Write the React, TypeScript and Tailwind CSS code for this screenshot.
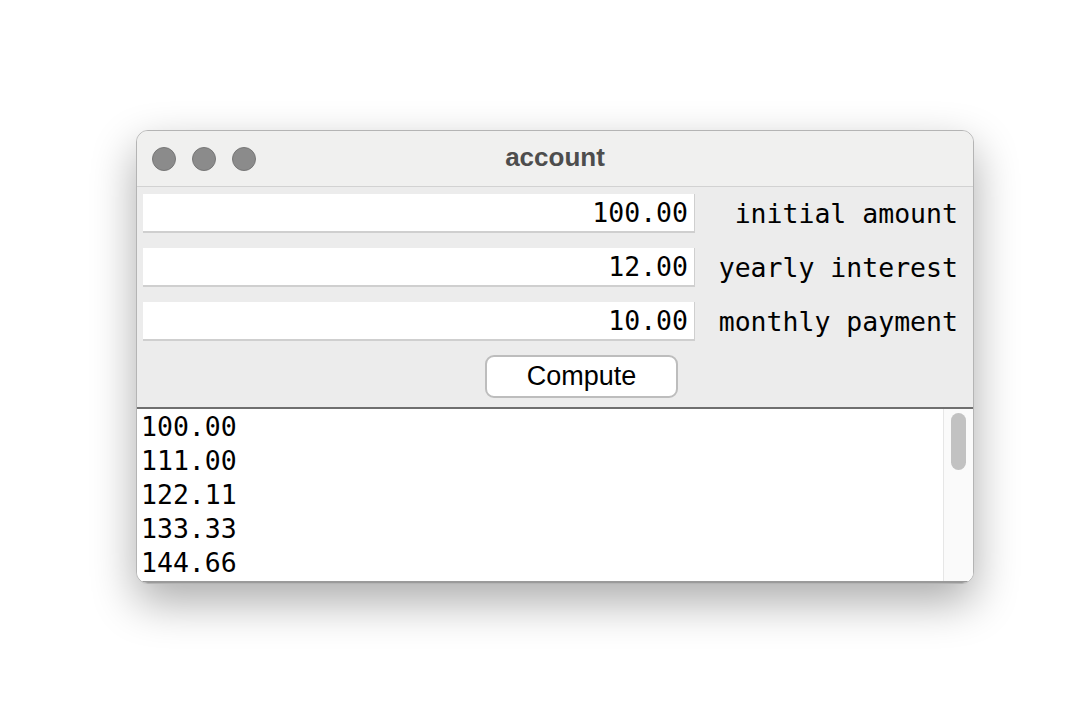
const mono = { fontFamily: '"DejaVu Sans Mono", "Liberation Mono", monospace' }

type Field = { value: string; label: string }

const fields: Field[] = [
    { value: "100.00", label: "initial amount" },
    { value: "12.00", label: "yearly interest" },
    { value: "10.00", label: "monthly payment" },
]

const lines: string[] = ["100.00", "111.00", "122.11", "133.33", "144.66"]

const App = () => {
    return (
        <div className="w-[1080px] h-[720px] bg-white pl-[136px] pt-[130px]">
            <div className="w-[838px] h-[454px] rounded-[12px] border border-[#b4b4b4] bg-[#ececec] overflow-hidden flex flex-col shadow-[0_18px_45px_rgba(0,0,0,0.33)]">
                {/* title bar */}
                <div className="relative h-[56px] shrink-0 bg-[#f0f0ef] border-b border-[#d2d2d2] flex items-center">
                    <div className="flex gap-[16px] pl-[15px]">
                        <div className="w-[24px] h-[24px] rounded-full bg-[#8b8b8b] border border-[#777]" />
                        <div className="w-[24px] h-[24px] rounded-full bg-[#8b8b8b] border border-[#777]" />
                        <div className="w-[24px] h-[24px] rounded-full bg-[#8b8b8b] border border-[#777]" />
                    </div>
                    <div className="absolute inset-0 flex items-center justify-center pb-[2px] text-[26px] font-bold text-[#4d4d4d]" style={{ fontFamily: '"Liberation Sans", Arial, sans-serif' }}>
                        account
                    </div>
                </div>

                {/* form */}
                <div className="flex flex-col pt-[7px] pl-[6px] pr-[15px] gap-[15px]">
                    {fields.map(f => (
                        <div key={f.label} className="flex items-center h-[39px] leading-[39px]" style={mono}>
                            <div className="w-[552px] h-[39px] bg-white border-b-2 border-r border-[#cfcfcf] flex items-center justify-end pr-[6px] text-[26.5px] text-black">
                                {f.value}
                            </div>
                            <div className="flex-1 text-right text-[26.5px] text-black">{f.label}</div>
                        </div>
                    ))}
                </div>
                <div className="pl-[348px] pt-[14px] h-[66px] shrink-0">
                    <div className="w-[193px] h-[43px] rounded-[9px] bg-white border-2 border-[#bdbdbd] flex items-center justify-center text-[27px] text-black" style={{ fontFamily: '"Liberation Sans", Arial, sans-serif' }}>
                        Compute
                    </div>
                </div>

                {/* output */}
                <div className="flex-1 flex bg-white border-t-2 border-[#6f6f6f] border-b-2 border-b-[#9a9a9a]">
                    <div className="flex-1 pl-[4px] pt-[1px] text-[26.5px] leading-[34px] text-black" style={mono}>
                        {lines.map(l => <div key={l}>{l}</div>)}
                    </div>
                    <div className="w-[30px] bg-[#fafafa] border-l border-[#e6e6e6] pt-[4px] flex justify-center">
                        <div className="w-[15px] h-[57px] rounded-full bg-[#c2c2c2]" />
                    </div>
                </div>
            </div>
        </div>
    )
}
export default App
